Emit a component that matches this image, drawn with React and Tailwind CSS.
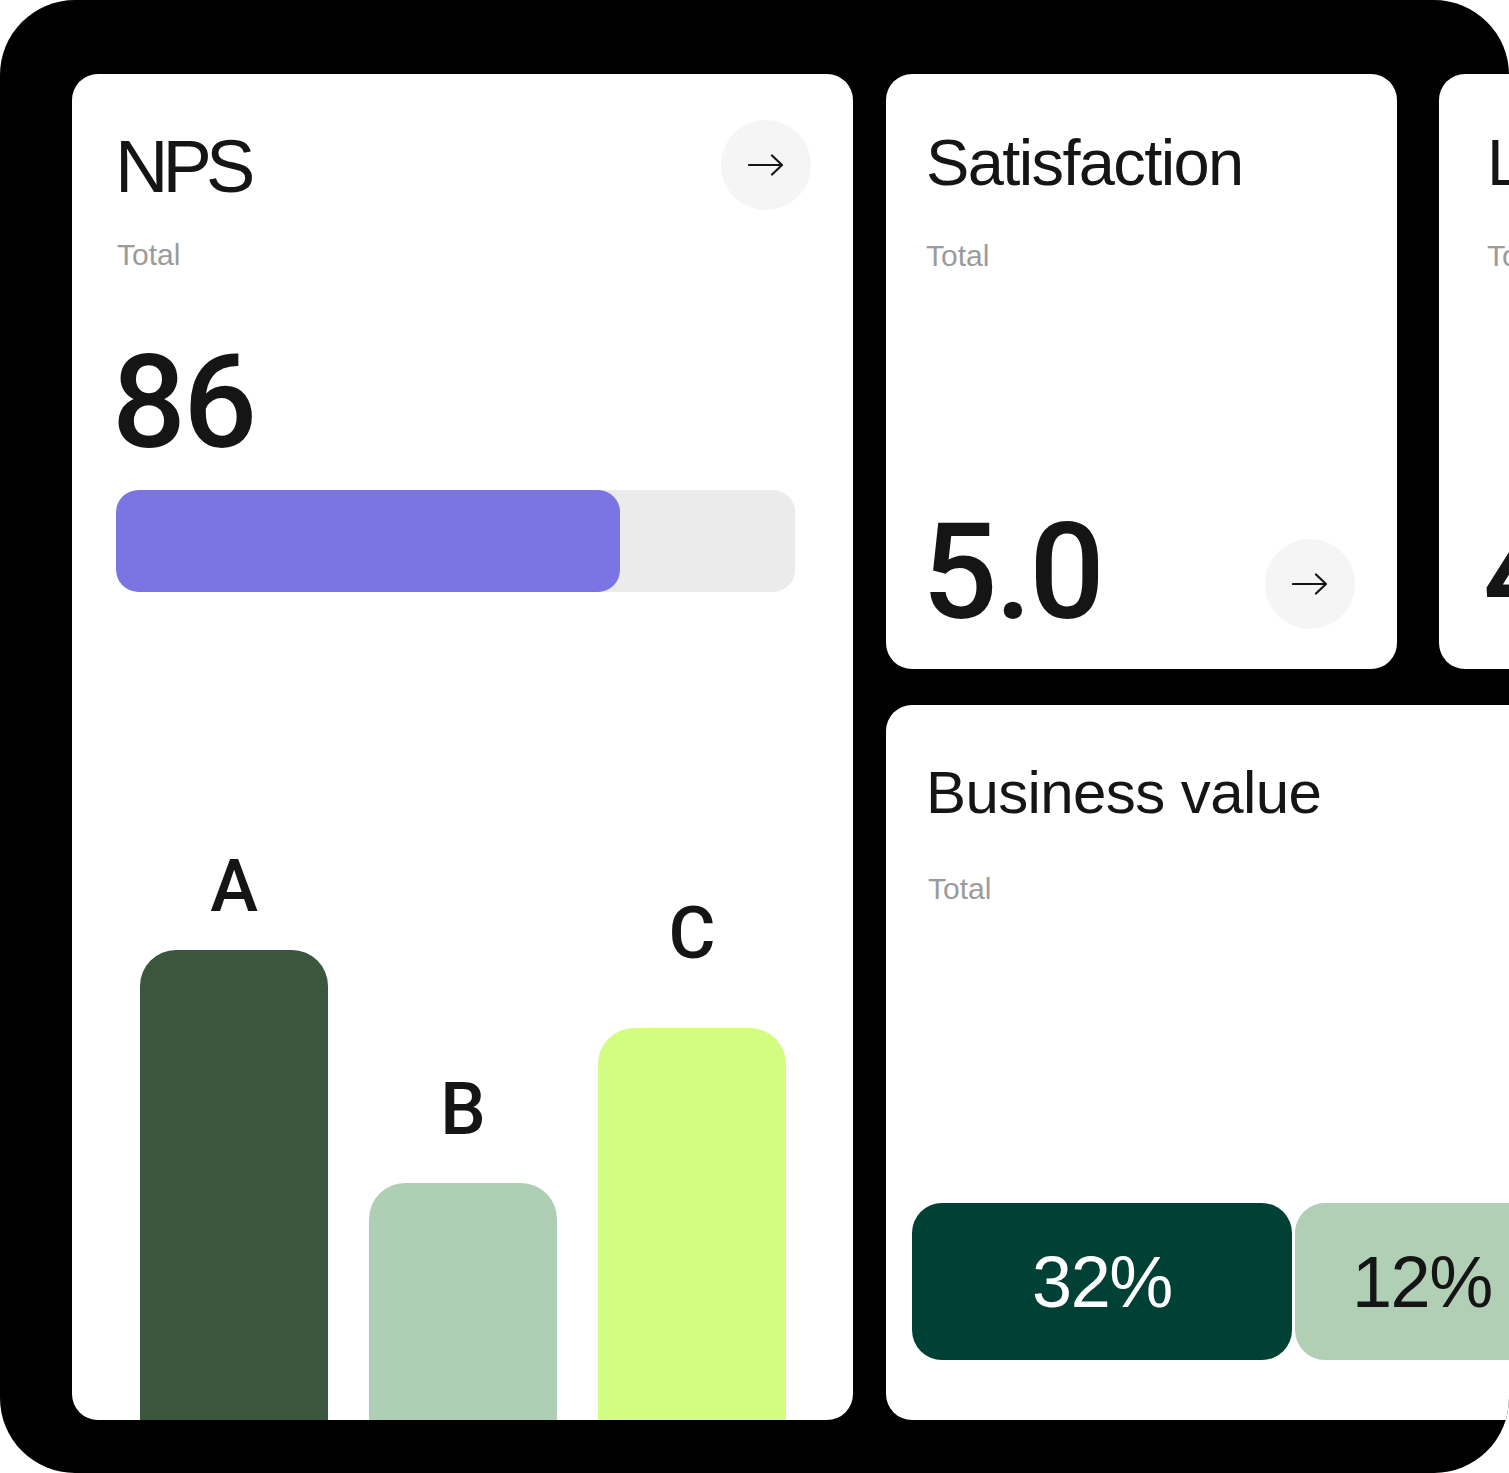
import React from "react";

const Arrow = () => (
  <svg width="36" height="22" viewBox="0 0 36 22" fill="none">
    <path d="M1 11H34M24 1.5L34 11L24 20.5" stroke="#151515" strokeWidth="2.2" strokeLinecap="round" strokeLinejoin="round" />
  </svg>
);

const ArrowButton = ({ className = "" }) => (
  <div className={`w-[90px] h-[90px] rounded-full bg-[#f5f5f5] flex items-center justify-center shrink-0 ${className}`}>
    <Arrow />
  </div>
);

const Bar = ({ label, height, color, gap }) => (
  <div className="flex flex-col items-center w-[188px] shrink-0">
    <span className={`font-['Roboto',sans-serif] font-medium text-[72px] leading-none text-[#151515] ${gap}`}>{label}</span>
    <div className={`w-full rounded-t-[36px] ${color}`} style={{ height }} />
  </div>
);

const SmallCard = ({ title, value, arrow, pl }) => (
  <div className={`w-[511px] h-[595px] shrink-0 bg-white rounded-[26px] flex flex-col pt-[56px] pr-[42px] pb-[30px] ${pl}`}>
    <h2 className="font-['Liberation_Sans',sans-serif] text-[65px] leading-none tracking-[-0.025em] text-[#151515]">{title}</h2>
    <p className="mt-[46px] font-['Liberation_Sans',sans-serif] text-[30px] leading-none text-[#9b9b9b]">Total</p>
    <div className="mt-auto flex items-end justify-between">
      <span className="-ml-[4px] font-['Roboto',sans-serif] font-medium text-[133px] leading-none tracking-[-0.02em] text-[#151515]">{value}</span>
      {arrow && <ArrowButton className="mb-[10px]" />}
    </div>
  </div>
);

export default function App() {
  return (
    <div className="w-[1509px] h-[1473px] bg-black rounded-[75px] overflow-hidden flex gap-[33px] pt-[74px] pl-[72px]">
      <div className="w-[781px] h-[1346px] shrink-0 bg-white rounded-[26px] flex flex-col overflow-hidden">
        <div className="flex justify-between pt-[46px] pl-[43px] pr-[42px]">
          <h2 className="mt-[10px] font-['Liberation_Sans',sans-serif] text-[74px] leading-none tracking-[-0.08em] text-[#151515]">NPS</h2>
          <ArrowButton />
        </div>
        <p className="mt-[30px] pl-[45px] font-['Liberation_Sans',sans-serif] text-[30px] leading-none text-[#9b9b9b]">Total</p>
        <span className="mt-[68px] pl-[40px] font-['Roboto',sans-serif] font-medium text-[130px] leading-none tracking-[-0.02em] text-[#151515]">86</span>
        <div className="mt-[22px] ml-[44px] w-[679px] h-[102px] rounded-[22px] bg-[#ebebeb] overflow-hidden">
          <div className="w-[504px] h-full rounded-[22px] bg-[#7b75e3]" />
        </div>
        <div className="mt-auto flex items-end gap-[41px] pl-[68px]">
          <Bar label="A" height={470} color="bg-[#3a573e]" gap="mb-[27px]" />
          <Bar label="B" height={237} color="bg-[#afcfb4]" gap="mb-[37px]" />
          <Bar label="C" height={392} color="bg-[#d2fd80]" gap="mb-[58px]" />
        </div>
      </div>

      <div className="flex flex-col gap-[36px] shrink-0">
        <div className="flex gap-[42px]">
          <SmallCard title="Satisfaction" value="5.0" arrow pl="pl-[40px]" />
          <SmallCard title="Loyalty" value="4.8" pl="pl-[48px]" />
        </div>
        <div className="w-[900px] h-[715px] bg-white rounded-[26px] flex flex-col pt-[58px]">
          <h2 className="pl-[40px] font-['Liberation_Sans',sans-serif] text-[60px] leading-none tracking-[-0.01em] text-[#151515]">Business value</h2>
          <p className="mt-[51px] pl-[42px] font-['Liberation_Sans',sans-serif] text-[30px] leading-none text-[#9b9b9b]">Total</p>
          <div className="mt-auto mb-[60px] ml-[26px] flex gap-[3px]">
            <div className="w-[380px] h-[157px] shrink-0 rounded-[30px] bg-[#014034] flex items-center justify-center">
              <span className="font-['Liberation_Sans',sans-serif] text-[72px] leading-none tracking-[-0.02em] text-white">32%</span>
            </div>
            <div className="w-[380px] h-[157px] shrink-0 rounded-[30px] bg-[#b0cfb5] flex items-center pl-[57px]">
              <span className="font-['Liberation_Sans',sans-serif] text-[72px] leading-none tracking-[-0.02em] text-[#151515]">12%</span>
            </div>
          </div>
        </div>
      </div>
    </div>
  );
}
